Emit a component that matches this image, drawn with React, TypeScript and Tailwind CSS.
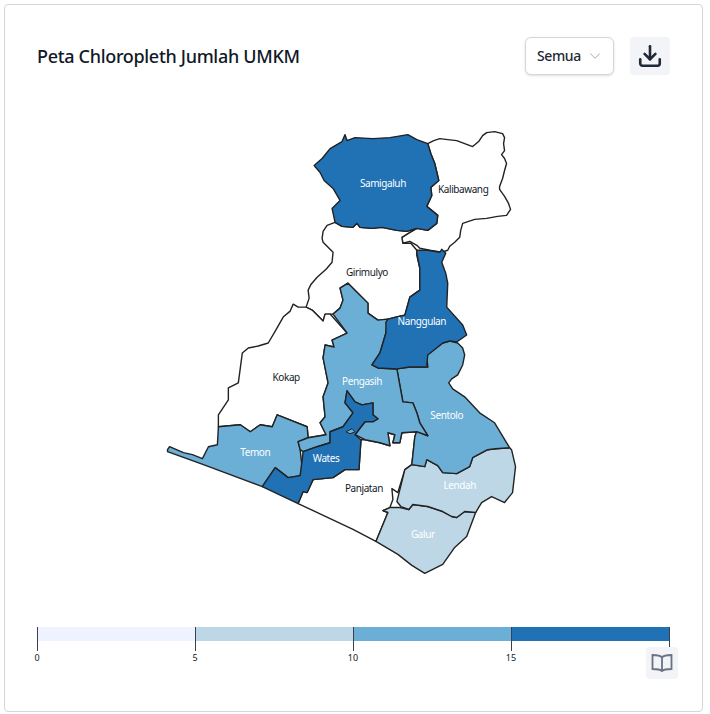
import React from 'react';
import { ChevronDown, Download } from 'lucide-react';

const DARK = '#2171b5';
const MID = '#6baed6';
const LIGHT = '#bdd7e7';
const NONE = '#ffffff';

type Region = { name: string; fill: string; points: string; labelX: number; labelY: number };

const regions: Region[] = [
  {
    name: 'Kalibawang',
    fill: NONE,
    labelX: 463.5,
    labelY: 193,
    points:
      '428,143 434,140 440,138 448,139 457,140 465,143 473,146 479,141 483,135 487,132 495,131 503,133 505,137 504,143 505,150 502,154 505,158 507,163 505,170 503,178 500,186 500,189 505,196 509,203 511,209 507,215 498,216 487,218 475,219 463,223 461,230 460,237 455,242 450,246 448,250 442,252 430,250 420,248 417,245 410,241 403,243 402,237 410,232 417,228 428,230 437,223 438,215 427,206 432,195 431,187 439,180 435,163 431,153',
  },
  {
    name: 'Girimulyo',
    fill: NONE,
    labelX: 367,
    labelY: 276,
    points:
      '335,222 327,225 323,231 322,238 323,242 333,252 332,262 326,269 317,277 311,284 308,290 309,298 306,307 312,310 317,315 323,321 325,314 330,314 333,314 340,308 343,300 340,288 348,283 357,292 368,303 368,313 378,320 388,319 400,316 405,315 410,297 420,290 420,268 417,255 417,250 411,243 403,243 402,237 410,232 417,228 407,231 397,230 382,227 372,228 360,227 357,223 353,227 342,226',
  },
  {
    name: 'Kokap',
    fill: NONE,
    labelX: 286,
    labelY: 381,
    points:
      '293,304 298,307 306,307 312,310 317,315 323,321 325,314 330,314 347,333 332,340 334,347 325,345 323,358 328,383 323,397 325,417 320,423 326,435 308,438 307,427 277,415 272,427 260,425 250,432 240,425 218,427 218,415 228,400 228,388 238,383 240,368 242,353 248,348 258,346 268,343 275,331 283,317 290,311',
  },
  {
    name: 'Panjatan',
    fill: NONE,
    labelX: 364,
    labelY: 492,
    points:
      '361,440 365,440 380,443 390,446 388,433 395,435 393,443 400,443 402,433 417,432 415,437 412,465 405,470 398,493 392,489 393,500 390,508 383,511 388,513 376,542 353,530 298,504 303,492 307,493 313,480 333,478 345,470 359,470',
  },
  {
    name: 'Galur',
    fill: LIGHT,
    labelX: 423,
    labelY: 539,
    points:
      '376,542 388,513 383,511 390,508 400,508 409,510 413,505 428,507 443,512 452,517 457,518 465,512 476,513 467,537 455,548 443,565 425,574 412,566 398,555',
  },
  {
    name: 'Lendah',
    fill: LIGHT,
    labelX: 460,
    labelY: 489,
    points:
      '397,502 401,507 409,510 413,505 428,507 443,512 452,517 457,518 465,512 476,513 482,503 492,497 505,503 513,493 516,467 512,450 510,448 496,449 488,450 473,458 470,467 457,474 443,473 438,466 427,460 425,467 412,465 405,470',
  },
  {
    name: 'Sentolo',
    fill: MID,
    labelX: 447,
    labelY: 419,
    points:
      '428,367 427,355 443,343 450,341 458,343 463,348 465,355 463,365 458,375 452,379 449,383 453,389 465,397 480,413 495,423 510,448 496,449 488,450 473,458 470,467 457,474 443,473 438,466 427,460 425,467 412,465 415,437 417,431 428,436 420,423 417,413 413,403 403,402 397,369 410,367',
  },
  {
    name: 'Temon',
    fill: MID,
    labelX: 255,
    labelY: 456,
    points:
      '167,450 169,447 183,453 192,455 202,459 208,447 217,445 218,427 240,425 250,432 260,425 272,427 277,415 307,427 308,438 298,442 300,450 302,468 300,476 288,478 275,468 262,487 203,465 167,452',
  },
  {
    name: 'Pengasih',
    fill: MID,
    labelX: 362,
    labelY: 385,
    points:
      '348,283 357,292 368,303 368,313 378,320 388,319 386,333 380,353 372,365 378,368 397,369 403,402 413,403 417,413 420,423 428,436 417,432 402,433 400,443 393,443 395,435 388,433 390,446 380,443 365,440 355,435 365,422 378,419 373,415 373,403 362,405 355,402 347,391 345,403 353,413 343,427 330,432 330,443 317,447 303,452 300,450 298,442 308,438 326,435 320,423 325,417 323,397 328,383 323,358 325,345 334,347 332,340 347,333 333,314 340,308 343,300 340,288',
  },
  {
    name: 'Wates',
    fill: DARK,
    labelX: 326,
    labelY: 462,
    points:
      '347,391 355,402 362,405 373,403 373,415 378,419 373,422 365,422 355,435 361,440 359,470 345,470 333,478 313,480 307,493 303,492 298,504 262,487 275,468 288,478 300,476 303,452 317,447 330,443 330,432 343,427 353,413 345,403',
  },
  {
    name: 'Nanggulan',
    fill: DARK,
    labelX: 422,
    labelY: 325,
    points:
      '417,253 417,250 428,250 440,252 442,249 446,253 442,262 446,273 448,283 447,307 463,325 467,335 457,342 450,341 443,343 428,355 427,365 428,367 410,367 397,369 378,368 372,365 380,353 386,333 386,322 388,319 400,316 405,315 410,297 420,290 420,268',
  },
  {
    name: 'Samigaluh',
    fill: DARK,
    labelX: 383,
    labelY: 187,
    points:
      '345,134 347,140 355,137 373,138 390,137 408,134 417,139 428,143 431,153 435,163 439,180 431,187 432,195 427,206 438,215 437,223 428,230 417,228 407,231 397,230 382,227 372,228 360,227 357,223 353,227 342,226 335,222 332,208 340,200 333,188 324,180 320,172 314,165 322,158 330,148 342,141',
  },
];

const legend = [
  { color: 'bg-[#eff3ff]', label: '0' },
  { color: 'bg-[#bdd7e7]', label: '5' },
  { color: 'bg-[#6baed6]', label: '10' },
  { color: 'bg-[#2171b5]', label: '15' },
];

const MapChart = () => (
  <svg viewBox="4 100 699 490" className="block h-[490px] w-full">
    {regions.map((r) => (
      <polygon key={r.name} points={r.points} fill={r.fill} stroke="#222222" strokeWidth={1.4} strokeLinejoin="round" />
    ))}
    <polygon points="346,432 352,429 355,432 350,434" fill={MID} stroke="#222222" strokeWidth={1} />
    {regions.map((r) => (
      <text
        key={r.name}
        x={r.labelX}
        y={r.labelY}
        textAnchor="middle"
        fontSize={10}
        letterSpacing={-0.4}
        fill={r.fill === NONE ? '#111827' : '#ffffff'}
      >
        {r.name}
      </text>
    ))}
  </svg>
);

const App = () => {
  return (
    <div className="h-[714px] w-[710px] bg-white p-1 font-['Noto_Sans',sans-serif]">
      <div className="relative h-[708px] w-[699px] rounded border border-[#d4d6de] bg-white">
        <div className="flex h-[95px] items-start justify-between pl-8 pr-8 pt-8">
          <h2 className="mt-[5px] text-lg leading-7 font-medium tracking-[-0.32px] text-[#111827]">
            Peta Chloropleth Jumlah UMKM
          </h2>
          <div className="flex items-center gap-4">
            <button className="flex h-[38px] w-[89px] items-center justify-between rounded-md border border-[#d4d6de] bg-white pl-[11px] pr-[9px] text-sm font-medium tracking-[-0.4px] text-[#1f2937] shadow-sm">
              Semua
              <ChevronDown size={18} strokeWidth={1.25} className="text-[#9ca3af]" />
            </button>
            <button className="flex h-[38px] w-10 items-center justify-center rounded bg-[#f3f4f8] text-[#1f2937]">
              <Download size={26} strokeWidth={2.4} />
            </button>
          </div>
        </div>
        <MapChart />
        <div className="mt-[37px] flex pl-8 pr-8">
          {legend.map((item) => (
            <div key={item.label} className="relative flex-1">
              <div className={`h-[14px] ${item.color}`} />
              <div className="absolute left-0 top-0 h-6 w-px bg-[#374151]" />
              <span className="absolute left-0 top-[26px] -translate-x-1/2 text-[9px] leading-[10px] text-[#111827]">
                {item.label}
              </span>
            </div>
          ))}
          <div className="h-6 w-px bg-[#374151]" />
        </div>
        <button className="absolute bottom-[32px] right-6 flex h-8 w-8 items-center justify-center rounded bg-[#f3f4f8] text-[#6b7280]">
          <svg width="22" height="20" viewBox="0 0 22 20" fill="none" stroke="currentColor" strokeWidth="1.8">
            <path d="M11 4.5C9.5 2.5 7.5 2 1.5 2v14c6 0 8 .5 9.5 2 1.5-1.5 3.5-2 9.5-2V2c-6 0-8 .5-9.5 2.5zM11 4.5V18" />
          </svg>
        </button>
      </div>
    </div>
  );
};

export default App;
